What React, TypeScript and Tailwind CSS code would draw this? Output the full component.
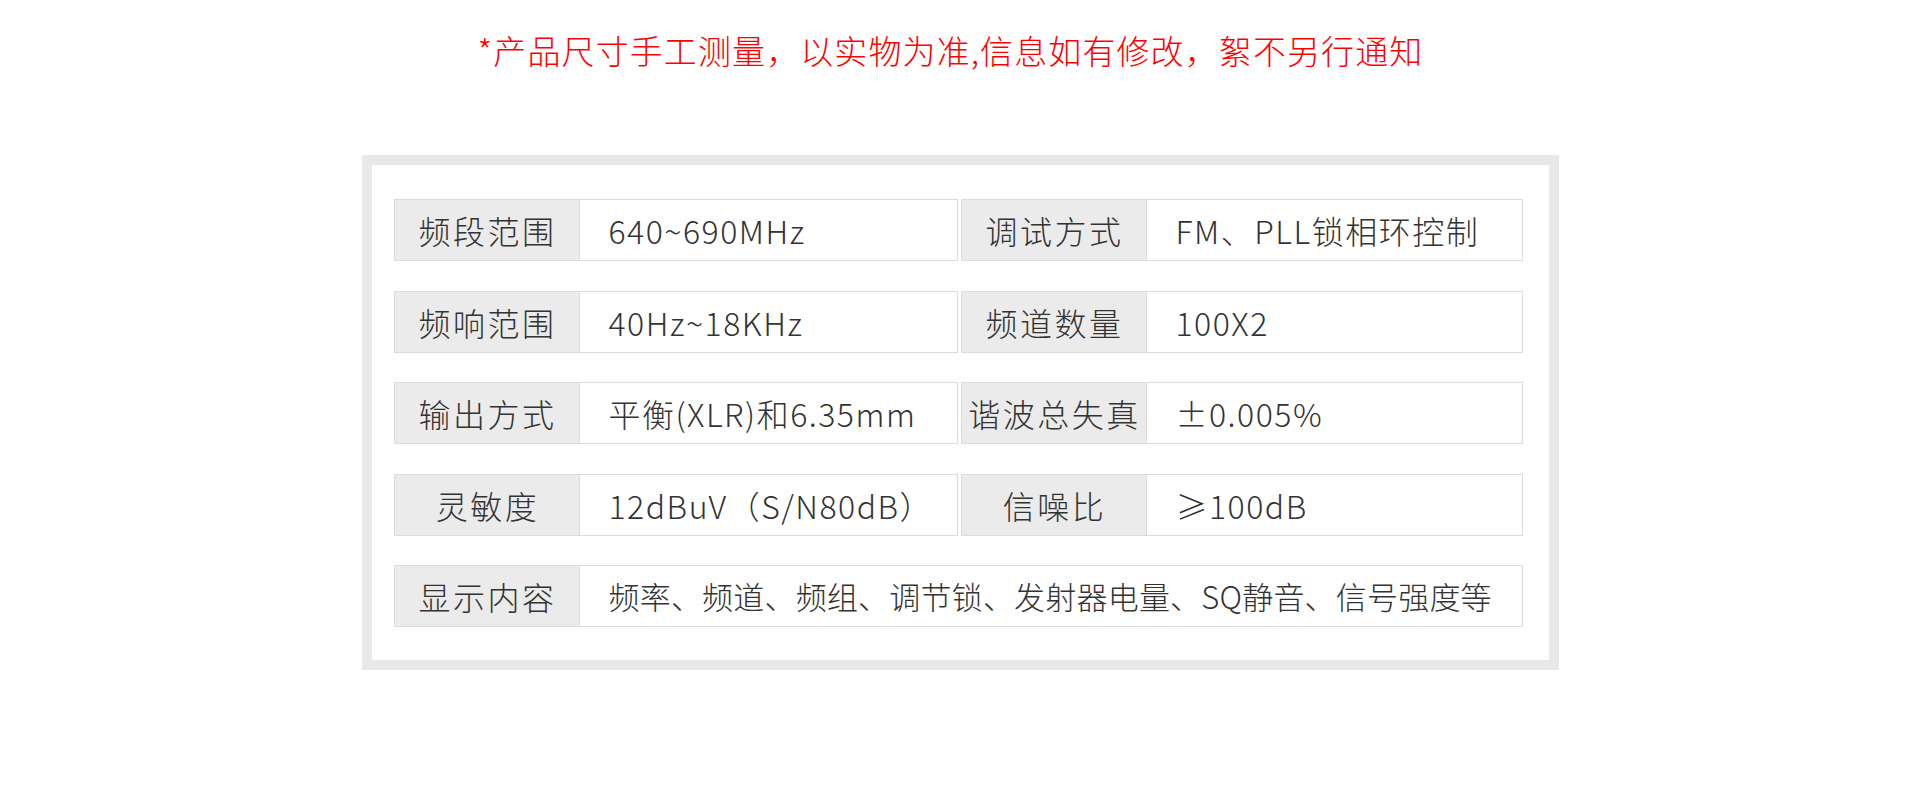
import React from "react";

const font = {
  fontFamily: '"Noto Sans CJK SC Light", "Noto Sans CJK SC", "Noto Sans", sans-serif',
};

function Pair({
  label,
  value,
  wide,
}: {
  label: string;
  value: string;
  wide?: boolean;
}) {
  return (
    <div className={"flex h-full border border-[#dcdcdc] " + (wide ? "w-full" : "")}>
      <div className="w-[185px] shrink-0 bg-[#ebebeb] border-r border-[#dcdcdc] flex items-center justify-center pl-[2px] text-[32px] tracking-[2.5px] font-light text-[#333]">
        {label}
      </div>
      <div
        className={
          "flex-1 bg-white flex items-center pl-[29px] font-light text-[#333] whitespace-nowrap " +
          (wide ? "text-[31px] tracking-[0.2px]" : "text-[32px] tracking-[1.5px]")
        }
      >
        {value}
      </div>
    </div>
  );
}

const rows: [string, string, string, string][] = [
  ["频段范围", "640~690MHz", "调试方式", "FM、PLL锁相环控制"],
  ["频响范围", "40Hz~18KHz", "频道数量", "100X2"],
  ["输出方式", "平衡(XLR)和6.35mm", "谐波总失真", "±0.005%"],
  ["灵敏度", "12dBuV（S/N80dB）", "信噪比", "≥100dB"],
];

export default function App() {
  return (
    <div className="w-full h-[785px] bg-white flex flex-col items-center" style={font}>
      <div className="mt-[28px] h-[44px] leading-[44px] pr-[19px] text-[33px] tracking-[1.1px] font-light text-[#ff0000] whitespace-nowrap">
        *产品尺寸手工测量，以实物为准,信息如有修改，絮不另行通知
      </div>
      <div className="mt-[83px] w-[1197px] border-[10px] border-[#e8e8e8] bg-white pt-[34px] pl-[22px] pr-[26px] pb-[33px] flex flex-col gap-[29.5px]">
        {rows.map((r, i) => (
          <div key={i} className="h-[62px] grid grid-cols-[564px_562px] gap-[3px]">
            <Pair label={r[0]} value={r[1]} />
            <Pair label={r[2]} value={r[3]} />
          </div>
        ))}
        <div className="h-[62px] flex">
          <Pair
            label="显示内容"
            value="频率、频道、频组、调节锁、发射器电量、SQ静音、信号强度等"
            wide
          />
        </div>
      </div>
    </div>
  );
}
